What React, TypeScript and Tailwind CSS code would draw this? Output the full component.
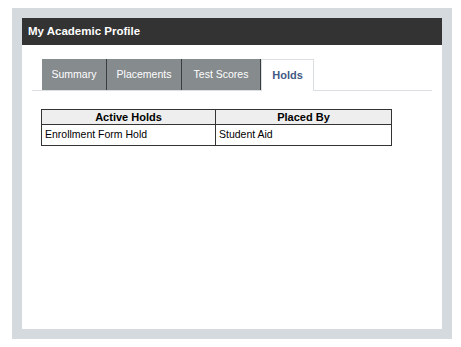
export default function App() {
  const tabs = [
    { label: "Summary", width: "w-[65px]" },
    { label: "Placements", width: "w-[75px]" },
    { label: "Test Scores", width: "w-[79px]" },
  ];

  return (
    <div className="w-[461px] h-[347px] bg-white pt-[8px] pl-[12px] font-['Liberation_Sans',Arial,sans-serif]">
      <div className="w-[440px] h-[331px] bg-[#d4dadd] p-[10px]">
        <div className="h-full bg-white flex flex-col">
          {/* Header */}
          <div className="h-[27px] bg-[#333333] flex items-center px-[6px]">
            <span className="text-white font-bold text-[11.5px]">My Academic Profile</span>
          </div>

          {/* Tabs */}
          <div className="mx-[10px] mt-[14px] border-b border-[#dcdfe1] flex pl-[10px]">
            {tabs.map((tab) => (
              <div
                key={tab.label}
                className={`${tab.width} h-[31px] bg-[#868b8e] border-r border-[#3a3d3f] flex items-center justify-center text-white text-[10.5px]`}
              >
                {tab.label}
              </div>
            ))}
            <div className="w-[53px] h-[32px] -mb-px bg-white border border-b-0 border-[#dcdfe1] flex items-center justify-center text-[#3f5a85] font-bold text-[11px]">
              Holds
            </div>
          </div>

          {/* Holds table */}
          <div className="ml-[19px] mt-[18px]">
            <table className="w-[351px] border-collapse text-[10.5px] text-black">
              <thead>
                <tr className="bg-[#eeeeee] h-[15px]">
                  <th className="w-[174px] border border-[#333333] font-bold text-[11px] text-center leading-[13px] py-0">
                    Active Holds
                  </th>
                  <th className="border border-[#333333] font-bold text-[11px] text-center leading-[13px] py-0">
                    Placed By
                  </th>
                </tr>
              </thead>
              <tbody>
                <tr className="h-[21px]">
                  <td className="border border-[#333333] px-[3px] py-0">Enrollment Form Hold</td>
                  <td className="border border-[#333333] px-[3px] py-0">Student Aid</td>
                </tr>
              </tbody>
            </table>
          </div>
        </div>
      </div>
    </div>
  );
}
